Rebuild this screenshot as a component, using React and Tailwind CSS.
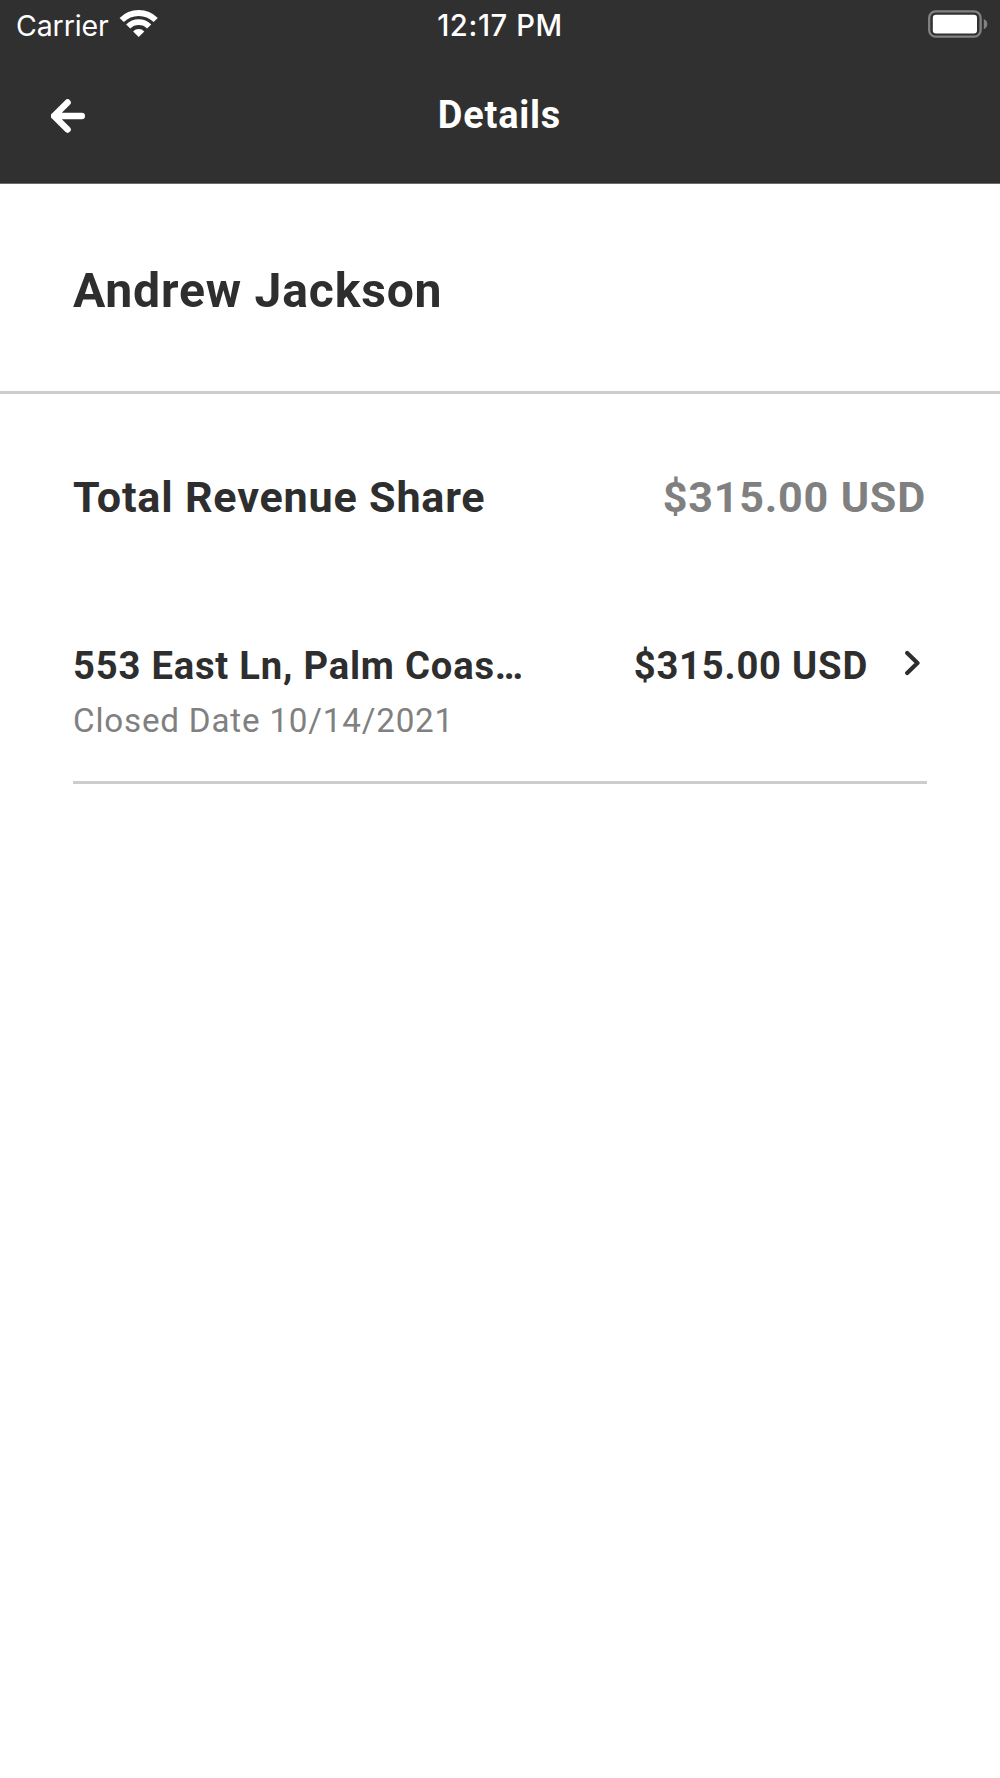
import React from "react";

function WifiIcon() {
  return (
    <svg className="h-7 w-[38px]" viewBox="120 11 38 28" fill="none" stroke="#fff" overflow="visible" aria-hidden="true">
      <path d="M121.7 20A24 24 0 0 1 155.7 20" strokeWidth="6" />
      <path d="M128.2 26.5A14.9 14.9 0 0 1 149.2 26.5" strokeWidth="5.9" />
      <path d="M133.1 31.4A8 8 0 0 1 144.3 31.4L138.7 37Z" fill="#fff" stroke="none" />
    </svg>
  );
}

function BatteryIcon() {
  return (
    <svg className="h-7 w-[60px]" viewBox="928 11 60 28" fill="none" overflow="visible" aria-hidden="true">
      <rect x="929.2" y="11.4" width="51.4" height="25.2" rx="6.4" stroke="#828282" strokeWidth="2.3" />
      <rect x="932.8" y="14.8" width="44.2" height="18.7" rx="3.2" fill="#fff" />
      <path d="M983.8 19Q987.3 20.6 987.3 24.1Q987.3 27.6 983.8 29.2Z" fill="#828282" />
    </svg>
  );
}

function BackArrow() {
  return (
    <svg className="h-[34px] w-[35px]" viewBox="51 99 35 34" fill="none" stroke="#fff" strokeWidth="6.4" strokeLinecap="round" strokeLinejoin="round" aria-hidden="true">
      <path d="M67.6 102.4L54 116L67.6 129.6M54 116H81.8" />
    </svg>
  );
}

function Chevron() {
  return (
    <svg className="h-[26px] w-4" viewBox="904 650 16 26" fill="none" stroke="#2e2e2e" strokeWidth="4.2" strokeLinecap="round" strokeLinejoin="round" aria-hidden="true">
      <path d="M907.2 653L917.5 663L907.2 673" />
    </svg>
  );
}

export default function App() {
  return (
    <div className="h-[1778px] w-[1000px] overflow-hidden bg-white font-['Roboto',sans-serif] text-[#2e2e2e]">
      <header className="h-[184px] border-b border-[#6b6b6b] bg-[#303030] text-white">
        <div className="grid h-[50px] grid-cols-3 items-center px-3 font-['Inter',sans-serif] text-[28.5px] leading-[48px]">
          <div className="flex items-center gap-[11px] pl-1">
            <span className="pt-[2px] tracking-[-0.1px]">Carrier</span>
            <WifiIcon />
          </div>
          <span className="pt-[2px] text-center text-[29.2px] font-medium tracking-[0.6px]">12:17 PM</span>
          <div className="flex justify-end">
            <BatteryIcon />
          </div>
        </div>
        <nav className="grid h-[131px] grid-cols-3 items-center px-[51px]">
          <BackArrow />
          <h1 className="pb-[2px] pr-px text-center text-[37.9px] font-bold leading-[48px] tracking-[0.8px]">Details</h1>
        </nav>
      </header>

      <section className="flex h-[210px] items-center border-b-[3px] border-[#cdcdcd] px-[73px] pt-[7px]">
        <h2 className="text-[48.1px] font-bold leading-[56px] tracking-[0.8px]">Andrew Jackson</h2>
      </section>

      <main className="px-[73px] pt-[79px]">
        <div className="flex h-[50px] items-center justify-between text-[43.1px] font-bold leading-[50px] tracking-[0.8px]">
          <span>Total Revenue Share</span>
          <span className="pr-px text-[#808080]">$315.00 USD</span>
        </div>

        <div className="mt-[121px] border-b-[3px] border-[#cdcdcd] pb-[40px]">
          <div className="flex h-[44px] items-center text-[38.2px] font-bold leading-[44px] tracking-[0.8px]">
            <span>553 East Ln, Palm Coas…</span>
            <span className="ml-auto">$315.00 USD</span>
            <span className="ml-[36px] mr-[7px] pb-[6px]">
              <Chevron />
            </span>
          </div>
          <p className="mt-[13px] text-[33.2px] leading-[40px] tracking-[0.8px] text-[#808080]">Closed Date 10/14/2021</p>
        </div>
      </main>
    </div>
  );
}
